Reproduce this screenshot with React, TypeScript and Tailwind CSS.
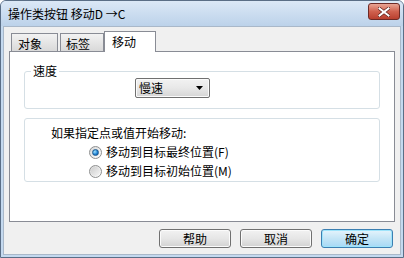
import React from "react";

const F = { fontFamily: '"Noto Sans CJK SC", "Noto Sans", sans-serif' };

function Radio({ checked }: { checked?: boolean }) {
  return (
    <span className="relative w-[13px] h-[13px] rounded-full border border-[#8e8f8f] bg-gradient-to-br from-[#d8d8d8] to-[#ffffff] flex items-center justify-center shrink-0">
      {checked ? (
        <span className="w-[7px] h-[7px] rounded-full bg-[radial-gradient(circle_at_35%_35%,#9fe2ff,#1a7ccf_60%,#0c4f99)] border border-[#1d5a8e]" />
      ) : (
        <span className="w-[9px] h-[9px] rounded-full bg-gradient-to-br from-[#cdcdcd] to-[#f6f6f6]" />
      )}
    </span>
  );
}

function Btn({ label, def }: { label: string; def?: boolean }) {
  return (
    <div
      className={
        def
          ? "w-[72px] h-[19px] rounded-[3px] border border-[#3c7fb1] bg-gradient-to-b from-[#e5f4fc] via-[#c4e5f6] to-[#a7d9f5] shadow-[inset_0_0_0_1px_#9ee4fb] flex items-center justify-center text-[12px] text-black"
          : "w-[72px] h-[19px] rounded-[3px] border border-[#707070] bg-gradient-to-b from-[#f2f2f2] via-[#e6e6e6] to-[#d2d2d2] shadow-[inset_0_0_0_1px_#fbfbfb] flex items-center justify-center text-[12px] text-black"
      }
    >
      {label}
    </div>
  );
}

export default function App() {
  return (
    <div style={F} className="w-[404px] h-[258px] flex flex-col bg-[#c4d9ef] border border-[#5a6e86] rounded-t-[6px] overflow-hidden text-[12px] text-black leading-none">
      {/* title bar */}
      <div className="h-[25px] flex items-center justify-between pl-[7px] pr-[3px] bg-gradient-to-b from-[#dbe8f6] to-[#bcd2ea]">
        <span className="text-[12px] text-black">操作类按钮 移动D →C</span>
        <div className="w-[32px] h-[17px] -mt-[4px] rounded-[3px] border border-[#6d2a26] bg-gradient-to-b from-[#e8a494] via-[#d0614f] to-[#b93f2e] flex items-center justify-center">
          <svg width="12" height="10" viewBox="0 0 12 10">
            <path d="M1.5 1.5 L10.5 8.5 M10.5 1.5 L1.5 8.5" stroke="#5a1f1a" strokeWidth="3.4" strokeLinecap="square" />
            <path d="M1.5 1.5 L10.5 8.5 M10.5 1.5 L1.5 8.5" stroke="#ffffff" strokeWidth="2" strokeLinecap="square" />
          </svg>
        </div>
      </div>
      {/* body */}
      <div className="flex-1 mx-[2px] mb-[2px] bg-[#f0f0f0] border border-[#a9b8c9] flex flex-col pt-[3px] px-[5px]">
        {/* tabs */}
        <div className="flex items-end pl-[2px] h-[21px] relative z-10">
          <div className="w-[47px] h-[18px] border border-[#898c95] border-b-0 bg-gradient-to-b from-[#f2f2f2] to-[#d9d9d9] flex items-center pl-[6px] pt-[2px]">对象</div>
          <div className="w-[44px] h-[18px] ml-[2px] border border-[#898c95] border-b-0 bg-gradient-to-b from-[#f2f2f2] to-[#d9d9d9] flex items-center pl-[5px] pt-[2px]">标签</div>
          <div className="w-[52px] h-[21px] -mb-[1px] border border-[#898c95] border-b-0 bg-white flex items-start pl-[7px] pt-[4px]">移动</div>
        </div>
        <div className="h-[171px] border border-[#898c95] bg-white flex flex-col px-[14px] pt-[19px]">
          {/* group 1 */}
          <div className="relative h-[38px] border border-[#d5dfe5] rounded-[3px] flex items-start justify-start pl-[110px] pt-[6px]">
            <span className="absolute left-[6px] -top-[7px] bg-white px-[2px]">速度</span>
            <div className="w-[75px] h-[20px] rounded-[2px] border border-[#707070] bg-gradient-to-b from-[#f2f2f2] via-[#e8e8e8] to-[#d5d5d5] shadow-[inset_0_0_0_1px_#fbfbfb] flex items-center justify-between pl-[3px] pr-[6px]">
              <span>慢速</span>
              <svg width="7" height="4" viewBox="0 0 7 4"><path d="M0 0 H7 L3.5 4 Z" fill="#000" /></svg>
            </div>
          </div>
          {/* group 2 */}
          <div className="mt-[9px] h-[64px] border border-[#d5dfe5] rounded-[3px] flex flex-col pl-[26px] pt-[7px]">
            <span className="h-[14px] flex items-center">如果指定点或值开始移动:</span>
            <div className="flex items-center gap-[4px] ml-[38px] mt-[5px] h-[14px]">
              <Radio checked />
              <span>移动到目标最终位置(F)</span>
            </div>
            <div className="flex items-center gap-[4px] ml-[38px] mt-[5px] h-[14px]">
              <Radio />
              <span>移动到目标初始位置(M)</span>
            </div>
          </div>
        </div>
        {/* buttons */}
        <div className="flex justify-end gap-[9px] mt-[7px] pr-[2px]">
          <Btn label="帮助" />
          <Btn label="取消" />
          <Btn label="确定" def />
        </div>
      </div>
    </div>
  );
}
